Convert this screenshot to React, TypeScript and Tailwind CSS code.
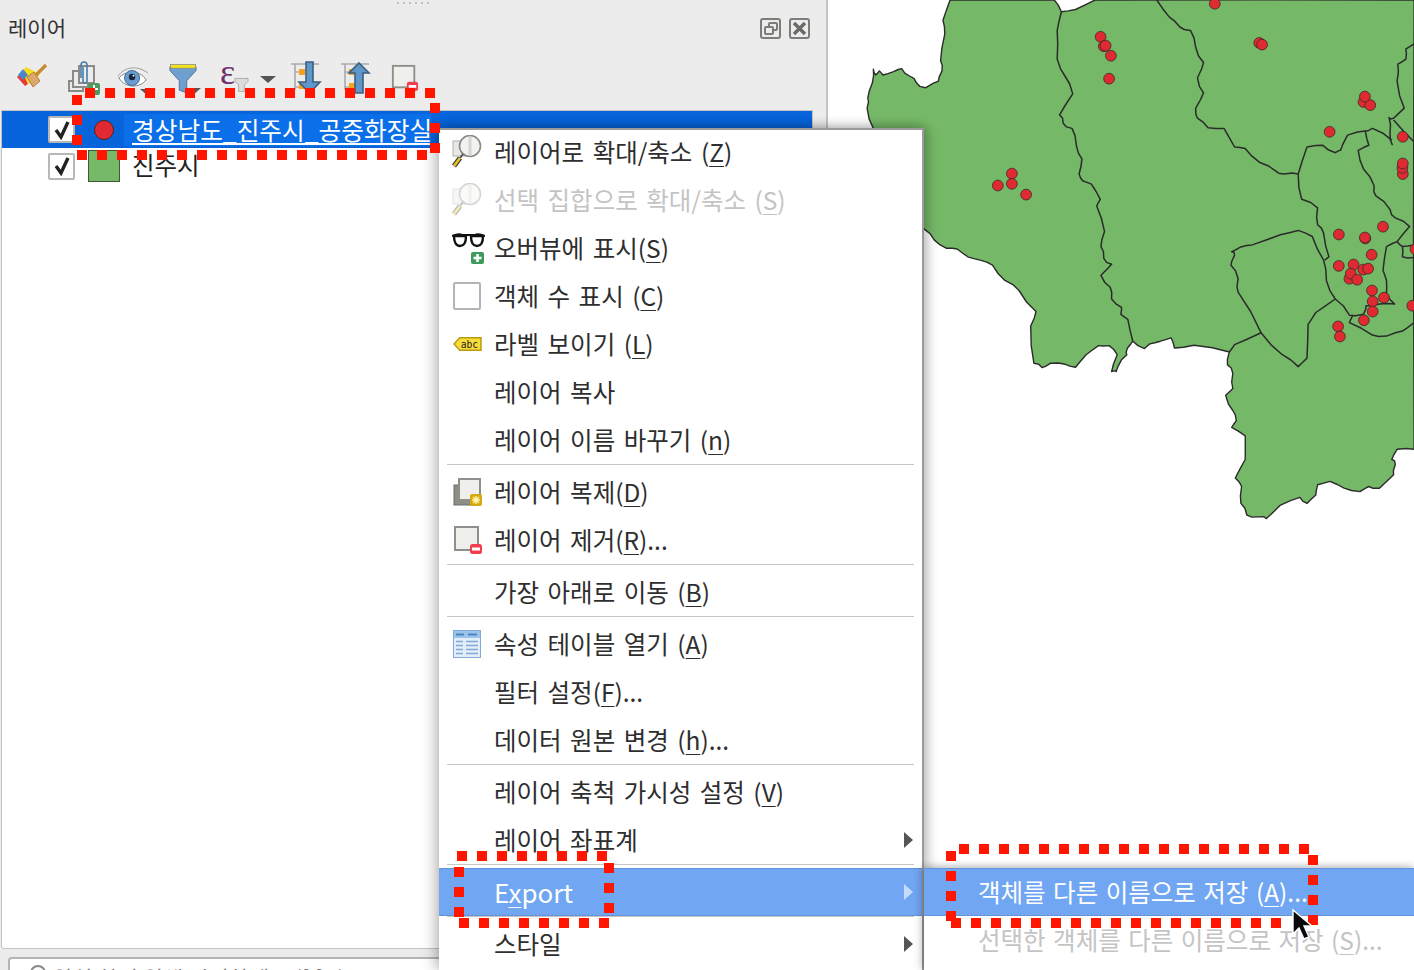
import React from 'react'

// map outline points are read off a crop, so scale them back to page pixels
const mx = (x: number) => +(x / 2.83).toFixed(1)
const my = (y: number) => +(y / 2.96).toFixed(1)
const line = (p: number[], close = false) => {
  let d = ''
  for (let i = 0; i < p.length; i += 2) {
    const x = mx(p[i])
    const y = my(p[i + 1])
    if (i) {
      // small midpoint wobble so the borders don't look ruler-straight
      const a = mx(p[i - 2])
      const b = my(p[i - 1])
      const w = Math.sin(i * 1.7) * 1.1
      d += `L${((a + x) / 2 + w).toFixed(1)} ${((b + y) / 2 - w).toFixed(1)} `
    }
    d += `${i ? 'L' : 'M'}${x} ${y} `
  }
  return d + (close ? 'Z' : '')
}

const outer = [255,0,235,60,240,100,228,180,232,210,222,240,185,260,160,245,140,225,118,203,95,212,65,222,55,210,45,222,38,205,35,245,22,290,20,320,38,380,120,600,182,678,210,710,245,735,275,737,305,760,340,770,375,785,410,830,450,860,498,922,483,965,492,1075,515,1088,540,1075,580,1078,610,1087,640,1050,675,1023,705,1023,728,1050,712,1100,725,1100,740,1065,755,1050,757,1030,772,1010,805,1032,820,1018,850,1010,880,1000,890,1030,945,1022,1045,1042,1040,1080,1055,1105,1055,1150,1035,1170,1055,1215,1065,1245,1052,1265,1090,1290,1090,1360,1062,1415,1080,1440,1078,1490,1095,1525,1130,1530,1150,1535,1190,1495,1245,1472,1265,1490,1290,1465,1295,1435,1330,1425,1370,1445,1415,1455,1440,1440,1470,1445,1510,1405,1515,1375,1505,1360,1520,1330,1568,1330,1568,0,665,0,610,28,570,35,550,0]

const borders = [
  [570,35,558,90,558,175,580,225,602,278,565,340,575,365,600,380,612,430,628,470,620,515,630,535,655,545,680,590,670,610,692,685,682,730,690,765,712,782,682,815,708,850,712,885,740,910,738,930,758,945,772,1010],
  [840,0,875,50,905,80,935,90,950,140,972,185,955,230,972,275,950,320,955,350,985,378,1030,380,1060,435,1090,440,1130,480,1175,505,1200,515,1240,515,1250,590,1295,615,1295,665,1312,690,1327,760,1315,770],
  [1240,515,1265,435,1310,430,1345,452,1360,445,1380,400,1430,388,1450,380,1505,415],
  [1568,130,1545,145,1545,175,1522,190,1520,240,1540,320,1510,350,1497,348,1500,395,1507,430],
  [1510,355,1568,420],
  [1430,388,1440,430,1410,445,1425,500,1455,550,1460,580,1500,620,1515,645,1555,670,1520,715,1490,730,1480,800,1490,830,1490,870,1513,900,1470,900,1432,905,1425,930,1385,933,1345,885,1320,830,1312,770,1280,700,1240,682,1190,695,1110,725,1075,732,1052,745,1060,755,1050,785,1070,825,1070,865,1135,985,1195,1050,1240,1085,1265,1060,1268,960,1290,925,1345,885],
  [1135,985,1060,1020,1045,1042],
  [1395,933,1385,955,1450,992,1490,995,1535,980,1568,955],
  [1520,715,1535,730,1535,760,1568,762],
  [1535,730,1568,725],
]

const dots = [[681,109],[690,137],[695,135],[710,165],[705,233],[1004,11],[1130,127],[1138,132],[1425,302],[1444,311],[1429,286],[1329,390],[1536,405],[430,514],[430,544],[390,549],[470,576],[1536,515],[1535,497],[1536,484],[1355,694],[1430,706],[1429,703],[1480,671],[1448,754],[1355,787],[1397,783],[1424,798],[1438,795],[1385,825],[1389,810],[1407,828],[1449,860],[1483,881],[1451,892],[1451,922],[1426,948],[1353,966],[1358,996],[1563,905],[1572,738]]

function Row({ x, y, n, vertical }: { x: number; y: number; n: number; vertical?: boolean }) {
  return (
    <>
      {Array.from({ length: n }).map((_, i) => (
        <rect key={i} x={vertical ? x : x + i * 20} y={vertical ? y + i * 20 : y} width="10" height="10" fill="#ff1500" />
      ))}
    </>
  )
}

function Annotations() {
  return (
    <svg className="absolute left-0 top-0 pointer-events-none" width="1414" height="970">
      <Row x={85} y={88} n={18} />
      <Row x={72} y={95} n={3} vertical />
      <Row x={77} y={150} n={18} />
      <Row x={430} y={103} n={3} vertical />
      <Row x={457} y={851} n={8} />
      <Row x={454} y={867} n={3} vertical />
      <Row x={604} y={863} n={3} vertical />
      <Row x={459} y={918} n={8} />
      <Row x={959} y={844} n={18} />
      <Row x={946} y={851} n={4} vertical />
      <Row x={1308} y={855} n={4} vertical />
      <Row x={951} y={918} n={17} />
    </svg>
  )
}

function MapCanvas() {
  return (
    <svg className="absolute right-0 top-0" width="554" height="970" viewBox="0 0 554 970">
      <path d={line(outer, true)} fill="#75b867" stroke="#2b2b2b" strokeWidth="1.4" strokeLinejoin="round" />
      {borders.map((b, i) => (
        <path key={i} d={line(b)} fill="none" stroke="#2b2b2b" strokeWidth="1.5" strokeLinejoin="round" />
      ))}
      {dots.map(([x, y], i) => (
        <circle key={i} cx={mx(x)} cy={my(y)} r="5.4" fill="#de2a30" stroke="#3a2a2a" strokeWidth="0.8" />
      ))}
    </svg>
  )
}

function Magnifier({ dim }: { dim?: boolean }) {
  return (
    <svg width="32" height="34" viewBox="0 0 32 34" opacity={dim ? 0.35 : 1}>
      <rect x="1" y="6" width="15" height="15" fill="#e8e8e6" stroke="#b0b0ac" />
      <circle cx="18" cy="11" r="10.500" fill="#f2f2f0" stroke="#8a8a86" strokeWidth="1.600" />
      <path d="M18 2v18" stroke="#d5d5d2" strokeWidth="3" />
      <path d="M11 19l-3 4" stroke="#555" strokeWidth="2" />
      <path d="M8 23l-6 8" stroke="#3c3c3c" strokeWidth="5" />
      <path d="M8 23l-6 8" stroke="#e8c21e" strokeWidth="2.600" />
    </svg>
  )
}

function Glasses() {
  return (
    <svg width="33" height="32" viewBox="0 0 33 32">
      <path d="M0 4c5-2 8-2 10-1h13c2-1 5-1 10 1" fill="none" stroke="#111" strokeWidth="2" />
      <path d="M2 4h12c0 6-2 10-6 10S2 10 2 4zM19 4h12c0 6-2 10-6 10S19 10 19 4z" fill="#fff" stroke="#111" strokeWidth="2.400" />
      <rect x="19" y="20" width="13" height="12" rx="2" fill="#3e9a5a" />
      <path d="M25.500 22v8M21.500 26h8" stroke="#fff" strokeWidth="2.600" />
    </svg>
  )
}

function EmptyBox() {
  return <div className="w-[28px] h-[28px] ml-[1px] border-2 border-[#b4b4b4] bg-white rounded-[2px]" />
}

function LabelTag() {
  return (
    <svg className="ml-[1px]" width="29" height="16" viewBox="0 0 30 16">
      <path d="M1 8l6-6.500h22v13H7z" fill="#f7dc3a" stroke="#b89a10" strokeWidth="1.500" />
      <text x="8" y="12" fontSize="10" fontFamily="'DejaVu Sans Mono', monospace" fill="#222">abc</text>
    </svg>
  )
}

function DuplicateLayer() {
  return (
    <svg className="ml-[1px]" width="30" height="30" viewBox="0 0 30 30">
      <rect x="1" y="8" width="20" height="20" fill="#8e8e86" stroke="#6e6e68" />
      <rect x="6" y="2" width="21" height="21" fill="#efefec" stroke="#8e8e8a" strokeWidth="2" />
      <rect x="17" y="17" width="12" height="12" rx="2" fill="#d3a90d" />
      <path d="M23 19v8M19 23h8M20 20l6 6M26 20l-6 6" stroke="#fff3b0" strokeWidth="1.400" />
    </svg>
  )
}

function RemoveLayer({ size = 30 }: { size?: number }) {
  return (
    <svg className="ml-[1px]" width={size} height={size} viewBox="0 0 30 30">
      <rect x="2" y="2" width="23" height="23" fill="#efefec" stroke="#8e8e8a" strokeWidth="2" />
      <rect x="17" y="19" width="12" height="10" rx="2.500" fill="#f0404f" />
      <rect x="19" y="22.500" width="8" height="3" fill="#fff" />
    </svg>
  )
}

function TableIcon() {
  return (
    <svg className="ml-[1px]" width="28" height="28" viewBox="0 0 28 28">
      <rect x="0.500" y="0.500" width="27" height="27" fill="#e3eefa" stroke="#7fa9d6" />
      <rect x="1" y="1" width="26" height="7" fill="#9cc3ea" />
      <path d="M3 4.500h8M15 4.500h9" stroke="#4a86c2" strokeWidth="2" />
      <path d="M3 11.500h7M3 15.500h7M3 19.500h7M3 23.500h7M13 11.500h12M13 15.500h12M13 19.500h12M13 23.500h12" stroke="#7fa9d6" strokeWidth="1.300" />
    </svg>
  )
}

function Brush() {
  return (
    <svg width="32" height="32" viewBox="0 0 32 32">
      <path d="M1 15l9-10 14 7-8 11z" fill="#f4dd1f" />
      <path d="M1 15l5-5 6 12-3 2z" fill="#e83838" />
      <path d="M2 13l5-6 5 6-5 5z" fill="#4c86c8" />
      <path d="M11 15l7-5 6 9-7 6z" fill="#dba76a" stroke="#a86f35" strokeWidth="0.800" />
      <path d="M20 13l10-10" stroke="#c98a2f" strokeWidth="3.400" />
    </svg>
  )
}

function AddLayerIcon() {
  return (
    <svg width="32" height="34" viewBox="0 0 32 34">
      <path d="M5 20H1v10h14v-3" fill="none" stroke="#8a8a86" strokeWidth="2" />
      <rect x="5" y="10" width="15" height="16" fill="#ececec" stroke="#8a8a86" strokeWidth="2" />
      <rect x="11" y="5" width="15" height="17" fill="#ececec" stroke="#8a8a86" strokeWidth="2" />
      <path d="M13 17V4a3 3 0 0 1 6 0v16a2 2 0 0 1-4 0V6" fill="none" stroke="#4a7ca8" strokeWidth="1.600" />
      <rect x="20" y="22" width="12" height="12" rx="2" fill="#4f9a60" />
      <path d="M26 24v8M22 28h8" stroke="#fff" strokeWidth="2" />
    </svg>
  )
}

function Eye() {
  return (
    <svg width="32" height="26" viewBox="0 0 34 26">
      <path d="M1 11C8 1 22 -1 33 8" fill="none" stroke="#999" strokeWidth="1" />
      <path d="M2 13C9 5 24 4 31 15 24 24 9 24 2 13z" fill="#fff" stroke="#777" />
      <circle cx="16" cy="13" r="8" fill="#6a9bd0" stroke="#3c6794" />
      <circle cx="16" cy="12" r="3.400" fill="#14243a" />
      <circle cx="17.500" cy="10.500" r="1" fill="#fff" />
    </svg>
  )
}

function Funnel() {
  return (
    <svg width="28" height="30" viewBox="0 0 30 32">
      <path d="M1 4h28v4L19 19v13l-8-3V19L1 8z" fill="#6f9fcf" stroke="#4f7599" />
      <rect x="1.500" y="1.500" width="27" height="4" fill="#f4e21a" stroke="#888" strokeWidth="0.800" />
    </svg>
  )
}

function Caret({ className }: { className: string }) {
  return <div className={`w-0 h-0 border-x-[8px] border-x-transparent border-t-[7px] border-t-[#555] ${className}`} />
}

function ExprFilter() {
  return (
    <div className="relative w-[30px] h-[32px]">
      <span className="absolute left-0 -top-[8px] text-[36px] leading-[36px] text-[#6f2f6f] font-['Liberation_Serif',serif]">ε</span>
      <svg className="absolute left-[14px] top-[15px]" width="15" height="15" viewBox="0 0 16 15">
        <path d="M1 1h14v3l-4 4v7H5V8L1 4z" fill="#dcdcda" stroke="#aaa" />
      </svg>
    </div>
  )
}

function MoveIcon({ up }: { up?: boolean }) {
  return (
    <svg width="32" height="34" viewBox="0 0 32 34">
      <path d="M1 3h28M5 3v26" stroke="#aaa" strokeWidth="1.600" />
      <path d="M5 11h5M5 26h5" stroke="#aaa" strokeWidth="1.400" />
      <rect x="9" y="8" width="6" height="6" fill="#f6a21a" />
      <rect x="9" y="22" width="6" height="6" fill="#f6a21a" />
      {up ? (
        <path d="M19 2l10 10h-6v20h-8V12H9z" fill="#5f97cb" stroke="#3c5f80" strokeWidth="1.600" />
      ) : (
        <path d="M16 1h7v20h7L19.500 32 9 21h7z" fill="#5f97cb" stroke="#3c5f80" strokeWidth="1.600" />
      )}
    </svg>
  )
}

function Check() {
  return (
    <div className="w-[27px] h-[27px] border-[2px] border-[#b8b8b8] bg-white rounded-[2px] flex items-center justify-center shrink-0">
      <svg width="18" height="20" viewBox="0 0 18 20">
        <path d="M3 10l5 7L15 2" fill="none" stroke="#222" strokeWidth="3.400" />
      </svg>
    </div>
  )
}

function Arrow({ light }: { light?: boolean }) {
  return (
    <div className={`w-0 h-0 border-y-[8px] border-y-transparent border-l-[9px] ${light ? 'border-l-[#c6dcfa]' : 'border-l-[#555]'}`} />
  )
}

type Item = {
  before?: string
  hot?: string
  after?: string
  icon?: React.ReactNode
  disabled?: boolean
  submenu?: boolean
  active?: boolean
}

const menu: (Item | 'sep')[] = [
  { before: '레이어로 확대/축소 (', hot: 'Z', after: ')', icon: <Magnifier /> },
  { before: '선택 집합으로 확대/축소 (', hot: 'S', after: ')', icon: <Magnifier dim />, disabled: true },
  { before: '오버뷰에 표시(', hot: 'S', after: ')', icon: <Glasses /> },
  { before: '객체 수 표시 (', hot: 'C', after: ')', icon: <EmptyBox /> },
  { before: '라벨 보이기 (', hot: 'L', after: ')', icon: <LabelTag /> },
  { before: '레이어 복사' },
  { before: '레이어 이름 바꾸기 (', hot: 'n', after: ')' },
  'sep',
  { before: '레이어 복제(', hot: 'D', after: ')', icon: <DuplicateLayer /> },
  { before: '레이어 제거(', hot: 'R', after: ')...', icon: <RemoveLayer /> },
  'sep',
  { before: '가장 아래로 이동 (', hot: 'B', after: ')' },
  'sep',
  { before: '속성 테이블 열기 (', hot: 'A', after: ')', icon: <TableIcon /> },
  { before: '필터 설정(', hot: 'F', after: ')...' },
  { before: '데이터 원본 변경 (', hot: 'h', after: ')...' },
  'sep',
  { before: '레이어 축척 가시성 설정 (', hot: 'V', after: ')' },
  { before: '레이어 좌표계', submenu: true },
  'sep',
  { before: 'E', hot: 'x', after: 'port', submenu: true, active: true },
  'sep',
  { before: '스타일', submenu: true },
]

function Label({ item }: { item: Item }) {
  return (
    <span className="whitespace-pre">
      {item.before}
      {item.hot && <span className="underline underline-offset-[4px] decoration-1">{item.hot}</span>}
      {item.after}
    </span>
  )
}

function MenuRow({ item }: { item: Item }) {
  const color = item.active ? 'bg-[#70a6f2] border-y border-[#6593d6] text-white' : item.disabled ? 'text-[#c4c4c4]' : 'text-[#2e2e2e]'
  return (
    <div className={`h-[48px] flex items-center ${color}`}>
      <div className="w-[55px] pl-[13px] flex items-center justify-start shrink-0">{item.icon}</div>
      <div className={`flex-1 leading-[46px] [word-spacing:3px] ${item.active ? 'text-[26px]' : 'text-[24.5px]'}`}>
        <Label item={item} />
      </div>
      {item.submenu && (
        <div className="pr-[9px]">
          <Arrow light={item.active} />
        </div>
      )}
    </div>
  )
}

function ContextMenu() {
  return (
    <div className="absolute left-[439px] top-[128px] w-[485px] h-[842px] bg-white border-t-2 border-r-2 border-[#9a9a9a] shadow-[-6px_0_12px_rgba(0,0,0,0.18),0_-2px_10px_rgba(0,0,0,0.12),6px_0_10px_rgba(0,0,0,0.15)]">
      <div className="-mt-[2px]">
        {menu.map((m, i) =>
          m === 'sep' ? (
            <div key={i} className="h-[4px] pl-[8px] pr-[8px]">
              <div className="h-px w-full bg-[#c6c6c6]" />
            </div>
          ) : (
            <MenuRow key={i} item={m} />
          ),
        )}
      </div>
    </div>
  )
}

function SubMenu() {
  return (
    <div className="absolute left-[924px] top-[868px] w-[490px] h-[102px] bg-white shadow-[-3px_0_8px_rgba(0,0,0,0.2),0_-3px_6px_rgba(0,0,0,0.12)] text-[24.5px] [word-spacing:2px]">
      <div className="h-[48px] bg-[#70a6f2] border-y border-[#6593d6] text-white leading-[46px] pl-[54px]">
        <Label item={{ before: '객체를 다른 이름으로 저장 (', hot: 'A', after: ')...' }} />
      </div>
      <div className="h-[48px] text-[#c4c4c4] leading-[48px] pl-[54px]">
        <Label item={{ before: '선택한 객체를 다른 이름으로 저장 (', hot: 'S', after: ')...' }} />
      </div>
    </div>
  )
}

function Cursor() {
  return (
    <svg className="absolute left-[1291px] top-[908px]" width="24" height="34" viewBox="0 0 24 34">
      <path d="M2 2v24l6-6 5 11 5-2-5-11h8z" fill="#0a0a0a" stroke="#fff" strokeWidth="1.400" />
    </svg>
  )
}

function LayersPanel() {
  return (
    <aside className="w-[828px] h-full bg-[#ececec] border-r-2 border-[#c4c4c4] flex flex-col shrink-0">
      <div className="h-[6px] flex justify-center items-start gap-[4px] pt-[2px]">
        {[0, 1, 2, 3, 4, 5].map((d) => (
          <div key={d} className="w-[2px] h-[2px] bg-[#c0c0c0]" />
        ))}
      </div>
      <div className="h-[44px] flex items-center justify-between pl-[8px] pr-[16px]">
        <span className="text-[21px] text-[#333]">레이어</span>
        <div className="flex gap-[8px]">
          <div className="w-[21px] h-[21px] border-2 border-[#7c7c78] rounded-[3px] flex items-center justify-center relative">
            <div className="absolute left-[6px] top-[2px] w-[10px] h-[9px] border-2 border-[#7c7c78] rounded-[2px]" />
            <div className="absolute left-[2px] top-[6px] w-[10px] h-[9px] border-2 border-[#7c7c78] bg-[#ececec] rounded-[2px]" />
          </div>
          <div className="w-[21px] h-[21px] border-2 border-[#7c7c78] rounded-[3px] flex items-center justify-center">
            <svg width="15" height="15" viewBox="0 0 15 15">
              <path d="M2 2l11 11M13 2L2 13" stroke="#6a6a66" strokeWidth="3.400" />
            </svg>
          </div>
        </div>
      </div>
      <div className="h-[56px] mb-[4px] relative flex items-center pl-[16px]">
        <div className="w-[52px]"><Brush /></div>
        <div className="w-[49px]"><AddLayerIcon /></div>
        <div className="w-[52px] relative">
          <Eye />
          <Caret className="absolute left-[23px] top-[24px]" />
        </div>
        <div className="w-[51px] relative">
          <Funnel />
          <Caret className="absolute left-[16px] top-[25px]" />
        </div>
        <div className="w-[40px]"><ExprFilter /></div>
        <Caret className="mr-[14px] mt-[2px]" />
        <div className="w-[50px]"><MoveIcon /></div>
        <div className="w-[50px]"><MoveIcon up /></div>
        <RemoveLayer size={28} />
      </div>
      <div className="flex-1 ml-[1px] mr-[13px] bg-white border border-[#c4c4c4] rounded-b-[3px] overflow-hidden">
        <div className="h-[37px] bg-[#0864da] flex items-center text-white relative">
          <div className="w-[46px] shrink-0" />
          <Check />
          <div className="w-[19px] shrink-0" />
          <div className="w-[20px] h-[20px] rounded-full bg-[#de2a30] border border-[#5a2020] shrink-0 mr-[10px]" />
          <div className="bg-[#0a6fe8] h-[32px] pl-[8px] w-[307px] overflow-hidden whitespace-nowrap text-[24.7px] leading-[31px] underline underline-offset-[3px] decoration-2 decoration-white">
            경상남도_진주시_공중화장실
          </div>
        </div>
        <div className="h-[36px] flex items-center">
          <div className="w-[46px] shrink-0" />
          <Check />
          <div className="w-[13px] shrink-0" />
          <div className="w-[32px] h-[32px] bg-[#75b867] border border-[#3c5a38] shrink-0 mr-[12px]" />
          <span className="text-[24.5px] leading-[32px] pb-[2px] text-[#222]">진주시</span>
        </div>
      </div>
      <div className="h-[21px] pt-[8px] pl-[8px] overflow-hidden">
        <div className="h-[30px] bg-white border-2 border-[#b4b4b4] rounded-[4px] flex items-start pl-[20px] pt-[6px] gap-[6px] text-[#777] text-[22px] leading-[24px] whitespace-nowrap">
          <span className="w-[16px] h-[16px] rounded-full border-2 border-[#888] shrink-0" />
          <span>위치 찾기 위해 입력하세요 (⌘K)</span>
        </div>
      </div>
    </aside>
  )
}

export default function App() {
  return (
    <div className="relative w-[1414px] h-[970px] overflow-hidden bg-white font-['Noto_Sans_CJK_KR',sans-serif] flex">
      <LayersPanel />
      <main className="flex-1 relative bg-white">
        <MapCanvas />
      </main>
      <ContextMenu />
      <SubMenu />
      <Annotations />
      <Cursor />
    </div>
  )
}
